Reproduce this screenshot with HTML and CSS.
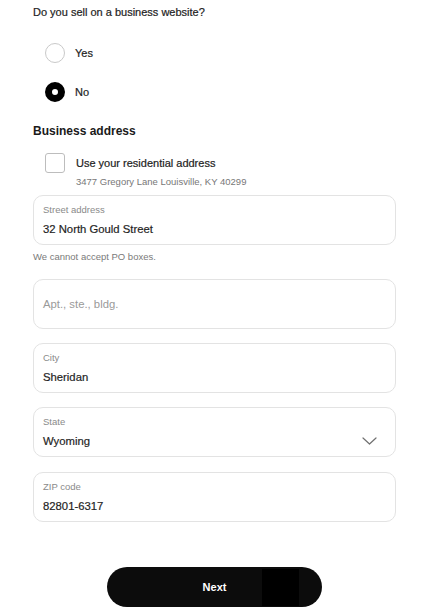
FILE: index.html
```html
<!DOCTYPE html>
<html>
<head>
<meta charset="utf-8">
<link rel="stylesheet" href="styles.css">
</head>
<body>
<div class="page">
  <p class="q">Do you sell on a business website?</p>
  <div class="radios">
    <div class="radio"><span class="circle"></span><span>Yes</span></div>
    <div class="radio"><span class="circle checked"></span><span>No</span></div>
  </div>
  <h2 class="section">Business address</h2>
  <div class="check-row">
    <span class="box"></span>
    <div class="check-text">
      <div class="check-label">Use your residential address</div>
      <div class="check-sub">3477 Gregory Lane Louisville, KY 40299</div>
    </div>
  </div>
  <div class="field first">
    <div class="label">Street address</div>
    <div class="value">32 North Gould Street</div>
  </div>
  <p class="help">We cannot accept PO boxes.</p>
  <div class="field apt">
    <div class="placeholder">Apt., ste., bldg.</div>
  </div>
  <div class="field">
    <div class="label">City</div>
    <div class="value">Sheridan</div>
  </div>
  <div class="field select">
    <div class="select-text">
      <div class="label">State</div>
      <div class="value">Wyoming</div>
    </div>
    <svg class="chevron" width="15" height="8" viewBox="0 0 15 8"><path d="M1 1 L7.5 7 L14 1" fill="none" stroke="#707070" stroke-width="1.2" stroke-linecap="round" stroke-linejoin="round"/></svg>
  </div>
  <div class="field zip">
    <div class="label">ZIP code</div>
    <div class="value">82801-6317</div>
  </div>
  <div class="actions">
    <button class="next">Next<span class="redact"></span></button>
  </div>
</div>
</body>
</html>
```
FILE: styles.css
```css
* { box-sizing: border-box; }
html, body { margin: 0; padding: 0; background: #fff; }
body { font-family: "Liberation Sans", Arial, sans-serif; color: #1f1f1f; }
.page { padding: 0 32px 0 33px; width: 428px; }
.q { margin: 0; font-size: 11px; line-height: 24px; font-weight: 500; color: #222; -webkit-text-stroke: 0.2px #222; }
.radios { display: flex; flex-direction: column; gap: 19px; margin-top: 19px; padding-left: 12px; }
.radio { display: flex; align-items: center; gap: 10px; height: 20px; font-size: 11px; color: #222; -webkit-text-stroke: 0.2px #222; }
.circle { width: 20px; height: 20px; border-radius: 50%; border: 1.3px solid #c9c9c9; flex: none; }
.circle.checked { border: 7.5px solid #000; }
.section { margin: 19px 0 0; font-size: 12px; line-height: 20px; font-weight: 700; color: #1a1a1a; }
.check-row { display: flex; gap: 11px; margin-top: 12px; padding-left: 12px; }
.box { width: 20px; height: 20px; border: 1.3px solid #bdbdbd; border-radius: 3px; flex: none; }
.check-label { font-size: 11px; line-height: 20px; color: #222; -webkit-text-stroke: 0.2px #222; }
.check-sub { margin-top: 2px; font-size: 9.5px; line-height: 14px; color: #777; }
.field { height: 50px; border: 1px solid #e3e3e3; border-radius: 10px; padding: 7px 9px 0; margin-top: 14px; }
.field.first { margin-top: 6px; }
.field.apt { margin-top: 15px; display: flex; align-items: center; padding-top: 0; }
.field.zip { margin-top: 15px; }
.label { font-size: 9.5px; line-height: 14px; color: #8a8a8a; }
.value { margin-top: 3px; font-size: 11.3px; line-height: 18px; color: #1f1f1f; -webkit-text-stroke: 0.2px #1f1f1f; }
.placeholder { font-size: 11.3px; line-height: 18px; color: #9a9a9a; }
.help { margin: 5px 0 0; font-size: 9.5px; line-height: 14px; color: #7a7a7a; }
.field.select { display: flex; justify-content: space-between; align-items: flex-start; padding-right: 18px; }
.chevron { margin-top: 22px; }
.actions { display: flex; justify-content: center; margin-top: 45px; }
.next { position: relative; width: 215px; height: 40px; border: none; border-radius: 20px; background: #0c0c0c; color: #fff; font-family: "Liberation Sans", Arial, sans-serif; font-size: 11px; font-weight: 700; padding: 0; }
.redact { position: absolute; left: 155px; top: 2px; width: 37px; height: 37px; background: #000; }
```
